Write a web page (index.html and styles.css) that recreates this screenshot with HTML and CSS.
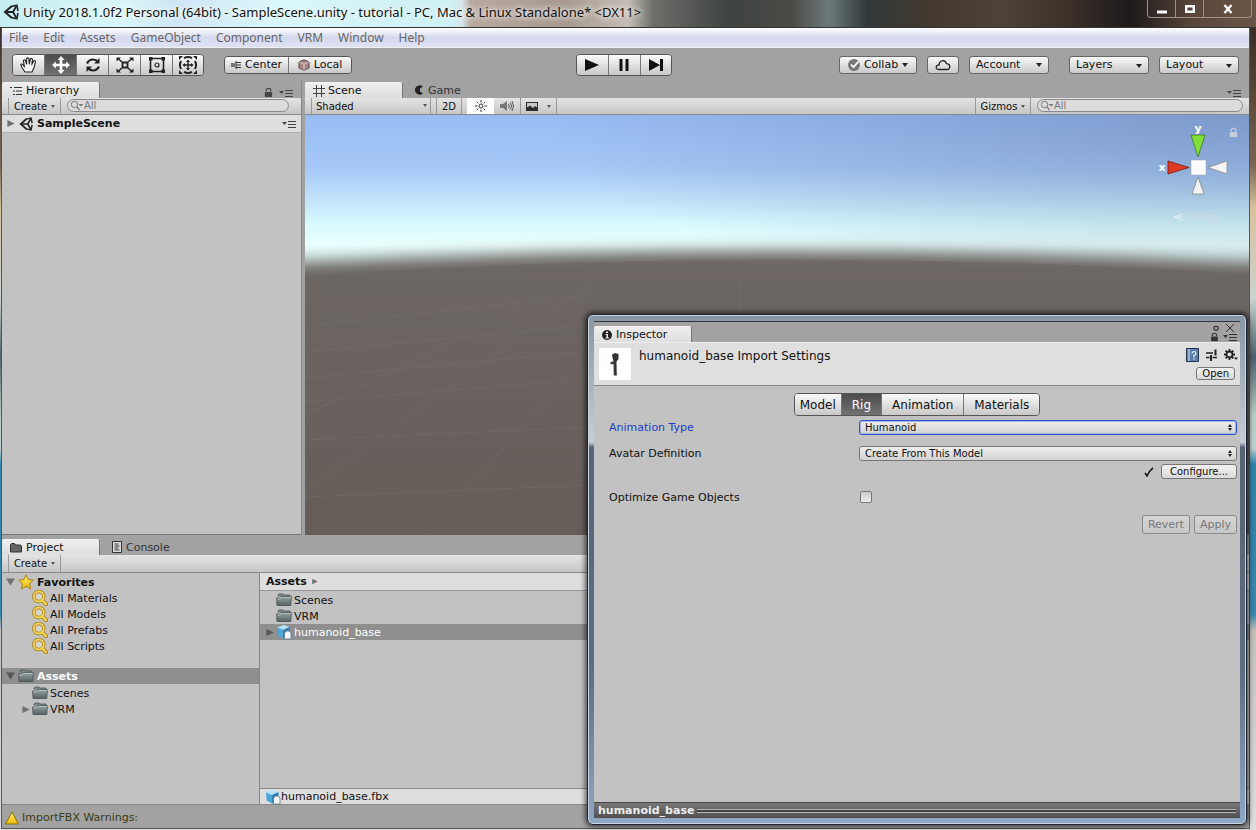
FILE: index.html
```
<!DOCTYPE html>
<html lang="en">
<head>
    <meta charset="UTF-8">
    <meta name="viewport" content="width=device-width, initial-scale=1.0">
    <title>Unity 2018.1.0f2 Personal (64bit) - SampleScene.unity</title>
    <link rel="stylesheet" href="styles.css">
</head>
<body>
    <!-- shared icons -->
    <svg class="defs" width="0" height="0">
        <defs>
            <linearGradient id="g-folder" x1="0" y1="0" x2="0" y2="1">
                <stop offset="0" stop-color="#9aa5a6"/><stop offset="1" stop-color="#566164"/>
            </linearGradient>
            <linearGradient id="g-gold" x1="0" y1="0" x2="0" y2="1">
                <stop offset="0" stop-color="#fff27a"/><stop offset="1" stop-color="#f0b800"/>
            </linearGradient>
        </defs>
        <symbol id="i-folder" viewBox="0 0 16 16">
            <path d="M2 4.500V3l1-1h4l1 1h6v2" fill="#7c888a" stroke="#4d5759" stroke-width=".8"/>
            <path d="M1 13.500 0.600 6h3L5 4.500h10.300L14.800 13.500z" fill="url(#g-folder)" stroke="#465053" stroke-width=".8"/>
            <path d="M1.500 7h2.500L5.500 5.400H14.800" fill="none" stroke="#c5cdce" stroke-width=".8"/>
        </symbol>
        <symbol id="i-search" viewBox="0 0 16 16">
            <path d="M9.500 9.500 14 14.200" stroke="#a87f10" stroke-width="4" stroke-linecap="round"/>
            <circle cx="6.800" cy="6.500" r="5" fill="#d8d6c8" stroke="#a87f10" stroke-width="3.400"/>
            <circle cx="6.800" cy="6.500" r="5" fill="none" stroke="#f5d55a" stroke-width="1.800"/>
            <path d="M10 10 14 14.200" stroke="#f5d55a" stroke-width="2.200" stroke-linecap="round"/>
        </symbol>
        <symbol id="i-unity" viewBox="0 0 16 16">
            <path d="M8.500 2.200 2 8l6.500 5.800" fill="none" stroke="#222" stroke-width="2"/>
            <path d="M8 2.500 13.800 1.200 15 7M8 13.500l5.800 1.300L15 9" fill="none" stroke="#222" stroke-width="1.600"/>
            <path d="M2.500 8h7.500L13.500 1.800M10 8l3.500 6.200" fill="none" stroke="#222" stroke-width="1.800"/>
        </symbol>
        <symbol id="i-model" viewBox="0 0 16 16">
            <path d="M1 3.500 8 1l5.500 2-6.500 3z" fill="#b5e4f8"/>
            <path d="M1 3.500 7 6v8.500L1.500 11.500z" fill="#4fa5d6"/>
            <path d="M7 6l6.500-3v8.500L7 14.500z" fill="#2f7fb4"/>
            <path d="M8.500 15V9l2-2H13l2 2v6z" fill="#f4f8fa" stroke="#5d7582" stroke-width=".8"/>
        </symbol>
        <symbol id="i-lock" viewBox="0 0 10 12">
            <path d="M2.500 5V3.500a2.500 2 0 0 1 5 0V5" fill="none" stroke="currentColor" stroke-width="1.300"/>
            <path d="M1 5.500h8V11H1z" fill="currentColor"/>
        </symbol>
        <symbol id="i-menu" viewBox="0 0 14 10">
            <path d="M0 3h5L2.500 6z" fill="currentColor"/>
            <path d="M6 2.500h8M6 5.500h8M6 8.500h8" stroke="currentColor"/>
        </symbol>
        <symbol id="i-filter" viewBox="0 0 14 12">
            <circle cx="4.500" cy="4.500" r="3.200" fill="none" stroke="#777"/>
            <path d="M7 7l2.500 3" stroke="#777" stroke-width="1.200"/><path d="M8.500 4h5L11 6.500z" fill="#777"/>
        </symbol>
        <symbol id="i-right" viewBox="0 0 8 10"><path d="M0 1v8l8-4z" fill="currentColor"/></symbol>
        <symbol id="i-down" viewBox="0 0 10 8"><path d="M0 0h10L5 8z" fill="currentColor"/></symbol>
    </svg>

    <div class="editor">
        <header class="titlebar">
            <svg class="logo" width="16" height="16"><use href="#i-unity"/></svg>
            <h1>Unity 2018.1.0f2 Personal (64bit) - SampleScene.unity - tutorial - PC, Mac &amp; Linux Standalone* &lt;DX11&gt;</h1>
            <div class="win-buttons">
                <button aria-label="Minimize"><svg width="12" height="12" viewBox="0 0 12 12"><path d="M1 7.500h10v3H1z" fill="#fff"/></svg></button>
                <button aria-label="Maximize"><svg width="12" height="12" viewBox="0 0 12 12"><path d="M2.200 3.200h7.600v5.600H2.200z" fill="none" stroke="#fff" stroke-width="2.400"/></svg></button>
                <button class="win-close" aria-label="Close"><svg width="12" height="12" viewBox="0 0 12 12"><path d="M2.500 2 9.500 10M9.500 2 2.500 10" stroke="#fff" stroke-width="2.400"/></svg></button>
            </div>
        </header>

        <div class="client">
            <nav class="menubar">
                <a href="#">File</a><a href="#">Edit</a><a href="#">Assets</a><a href="#">GameObject</a><a href="#">Component</a><a href="#">VRM</a><a href="#">Window</a><a href="#">Help</a>
            </nav>

            <div class="toolbar">
                <div class="btn-group tools">
                    <button aria-label="Hand"><svg width="20" height="18" viewBox="0 0 20 18"><path d="M6 16 3 11.500 1.800 8.500q1.200-1.300 2.600.8L5.500 11 4.400 4.500Q5.500 3 6.400 4.500L7.600 8 7.600 2.600Q9 1.200 9.900 2.600L10.300 8 11.500 2.800q1.400-1 2 .5L12.800 8.600 14.800 4.800q1.500-.5 1.700 1L15 11.500 13 16z" fill="#f6f6f6" stroke="#222" stroke-width="1.100" stroke-linejoin="round"/></svg></button>
                    <button class="on" aria-label="Move"><svg width="20" height="20" viewBox="0 0 20 20"><path d="M10 1 13.500 5H11.300V8.700H15V6.500L19 10 15 13.500V11.300H11.300V15H13.500L10 19 6.500 15H8.700V11.300H5V13.500L1 10 5 6.500V8.700H8.700V5H6.500z" fill="#fff"/></svg></button>
                    <button aria-label="Rotate"><svg width="18" height="18" viewBox="0 0 18 18"><path d="M3 7.500Q5 3.500 9 3.500q3 0 5 2.500M15 10.500q-2 4-6 4-3 0-5-2.500" fill="none" stroke="#222" stroke-width="2.200"/><path d="M15.500 2v5.500H10zM2.500 16v-5.500H8z" fill="#222"/></svg></button>
                    <button aria-label="Scale"><svg width="20" height="18" viewBox="0 0 20 18"><path d="M7.500 6.500h5v5h-5z" fill="none" stroke="#222" stroke-width="1.800"/><path d="M3 2.500 7 6M17 2.500 13 6M3 15.500 7 12M17 15.500 13 12" stroke="#222" stroke-width="1.500"/><path d="M1.500 1.500H6L1.500 5.500zM18.500 1.500H14l4.500 4zM1.500 16.500H6l-4.500-4zM18.500 16.500H14l4.500-4z" fill="#222"/></svg></button>
                    <button aria-label="Rect"><svg width="20" height="18" viewBox="0 0 20 18"><path d="M3.500 2.500h13v13h-13z" fill="none" stroke="#222" stroke-width="1.600"/><circle cx="10" cy="9" r="2" fill="none" stroke="#222" stroke-width="1.200"/><path d="M2 1h3.500v3.500H2zM14.500 1H18v3.500h-3.500zM2 13.500h3.500V17H2zM14.500 13.500H18V17h-3.500z" fill="#222"/></svg></button>
                    <button aria-label="Transform"><svg width="20" height="20" viewBox="0 0 20 20"><g fill="none" stroke="#222" stroke-width="2"><path d="M6 3.100Q10 .7 14 3.100M6 16.900q4 2.400 8 0M3.100 6Q.7 10 3.100 14M16.900 6q2.400 4 0 8"/></g><path d="M10 5.500v9M5.500 10h9" stroke="#222" stroke-width="1.400"/><path d="M8 7 10 4.500 12 7zM8 13l2 2.500 2-2.500zM7 8 4.500 10 7 12zM13 8l2.500 2-2.500 2z" fill="#222"/><path d="M1 1h4L1 5zM19 1h-4l4 4zM1 19h4l-4-4zM19 19h-4l4-4z" fill="#222"/></svg></button>
                </div>
                <div class="btn-group pivots">
                    <button><svg width="10" height="10" viewBox="0 0 10 10"><path d="M0 3h4v4H0z" fill="#777"/><path d="M5 1v8M5 2.500h5M5 5h5M5 7.500h5" stroke="#333"/></svg>Center</button>
                    <button><svg width="12" height="12" viewBox="0 0 12 12"><path d="M6 .8 11 3v6L6 11.200 1 9V3z" fill="#a88" stroke="#544"/><path d="M1 3l5 2.200L11 3M6 5.200v6" fill="none" stroke="#dcc"/></svg>Local</button>
                </div>
                <div class="btn-group play">
                    <button aria-label="Play"><svg width="16" height="14" viewBox="0 0 16 14"><path d="M1 1v12l14-6z" fill="#111"/></svg></button>
                    <button aria-label="Pause"><svg width="12" height="14" viewBox="0 0 12 14"><path d="M1.500 1h3v12h-3zM7.500 1h3v12h-3z" fill="#111"/></svg></button>
                    <button aria-label="Step"><svg width="16" height="14" viewBox="0 0 16 14"><path d="M1 1v12l11-6zM12 1h3v12h-3z" fill="#111"/></svg></button>
                </div>
                <div class="account">
                    <button class="tb collab"><svg width="12" height="12" viewBox="0 0 12 12"><circle cx="6" cy="6" r="6" fill="#777"/><path d="M3 5.500 5.500 8.200 10.500 2.500" fill="none" stroke="#fff" stroke-width="1.800"/></svg>Collab<i class="caret"></i></button>
                    <button class="tb cloud" aria-label="Services"><svg width="16" height="12" viewBox="0 0 16 12"><path d="M4 10.500Q1 10.500 1.200 8 1.500 6 4 6 4.500 2 8 1.700q2.500 0 3.500 3 3.500.6 3.300 3.300-.3 2.500-2.800 2.500z" fill="none" stroke="#222" stroke-width="1.300"/></svg></button>
                    <button class="tb drop">Account<i class="caret"></i></button>
                    <span class="pick layers"><select class="tb" aria-label="Layers"><option>Layers</option></select></span>
                    <span class="pick"><select class="tb" aria-label="Layout"><option>Layout</option></select></span>
                </div>
            </div>

            <div class="upper">
                <section class="hierarchy">
                    <div class="tabs">
                        <button class="tab on"><svg width="12" height="10" viewBox="0 0 12 10"><path d="M0 1.500h2M4 1.500h8M3 5h2M6 5h6M3 8.500h2M6 8.500h6" stroke="#333"/></svg>Hierarchy</button>
                        <span class="tab-icons"><svg width="9" height="11"><use href="#i-lock"/></svg><svg width="14" height="10"><use href="#i-menu"/></svg></span>
                    </div>
                    <div class="bar">
                        <button class="mini create">Create<i class="caret"></i></button>
                        <label class="search"><svg width="14" height="12"><use href="#i-filter"/></svg><input type="text" placeholder="All" aria-label="Search hierarchy"></label>
                    </div>
                    <div class="scene-row"><svg class="gray" width="8" height="9"><use href="#i-right"/></svg><svg width="14" height="14"><use href="#i-unity"/></svg><b>SampleScene</b><svg class="end" width="14" height="10"><use href="#i-menu"/></svg></div>
                </section>

                <section class="scene">
                    <div class="tabs">
                        <button class="tab on"><svg width="12" height="12" viewBox="0 0 12 12"><path d="M3.500 0v12M8.500 0v12M0 3.500h12M0 8.500h12" stroke="#444"/></svg>Scene</button>
                        <button class="tab game"><svg width="10" height="10" viewBox="0 0 10 10"><path d="M9 1.500A4.800 4.800 0 1 0 9 8.500L6 6.500V3.500z" fill="#222"/></svg>Game</button>
                        <span class="tab-icons"><svg width="14" height="10"><use href="#i-menu"/></svg></span>
                    </div>
                    <div class="bar">
                        <span class="pick flat"><select class="mini" aria-label="Draw mode"><option>Shaded</option></select></span>
                        <button class="mini two-d">2D</button>
                        <button class="mini light on" aria-label="Lighting"><svg width="12" height="12" viewBox="0 0 12 12"><circle cx="6" cy="6" r="2" fill="none" stroke="#333"/><path d="M6 0v2.500M6 9.500V12M0 6h2.500M9.500 6H12M1.800 1.800l1.600 1.600M8.600 8.600l1.600 1.600M1.800 10.200l1.600-1.600M8.600 3.400l1.600-1.600" stroke="#333"/></svg></button>
                        <button class="mini sound" aria-label="Audio"><svg width="14" height="12" viewBox="0 0 14 12"><path d="M0 4h3l4-3v10L3 8H0z" fill="#777"/><path d="M8.500 4q1.500 2 0 4M10.300 2.500q2.500 3.500 0 7M12 1q3 5 0 10" fill="none" stroke="#555"/></svg></button>
                        <button class="mini fx" aria-label="Effects"><svg width="12" height="9" viewBox="0 0 12 9"><path d="M0 0h12v9H0z" fill="#2b2b2b"/><path d="M1 1h10v4.500L9 4 7 6 4 3.500 1 5.500z" fill="#c8c8c8"/></svg><i class="caret"></i></button>
                        <button class="mini gizmos">Gizmos<i class="caret"></i></button>
                        <label class="search"><svg width="14" height="12"><use href="#i-filter"/></svg><input type="text" placeholder="All" aria-label="Search scene"></label>
                    </div>
                    <div class="viewport">
                        <svg class="ground" viewBox="0 0 944 420" preserveAspectRatio="none">
                            <defs><filter id="haze" x="-10%" y="-10%" width="120%" height="120%"><feGaussianBlur stdDeviation="0 8"/></filter>
                            <linearGradient id="g-ground" x1="0" y1="0" x2="0" y2="1"><stop offset="0" stop-color="#6d6764"/><stop offset="1" stop-color="#655c57"/></linearGradient></defs>
                            <path d="M-80 153Q470 119 1030 153V500H-80z" fill="url(#g-ground)" filter="url(#haze)"/>
                            <path d="M0 161Q470 129 944 159V420H0z" fill="url(#g-ground)" opacity=".7"/>
                            <g stroke="#8b8480" stroke-width="1" opacity=".2" fill="none">
                                <path d="M0 211 285 180M0 237 285 210M0 263 285 236M0 287 285 264M0 325 285 312M0 382 285 370"/>
                                <path d="M0 376 285 170M120 420 283 240M0 300 220 190M435 164V200"/>
                            </g>
                        </svg>
                        <svg class="gizmo" width="90" height="110" viewBox="0 0 90 110">
                            <path d="M34 20h14l-7 22z" fill="#7fe03a" stroke="#3b7a1c" stroke-width=".8"/>
                            <path d="M11 46v13l21-6.500z" fill="#e03a22" stroke="#7a1c10" stroke-width=".8"/>
                            <path d="M70 46v13l-19-6.500z" fill="#f4f4f4" stroke="#888" stroke-width=".8"/>
                            <path d="M35 79h12L41 62z" fill="#f4f4f4" stroke="#888" stroke-width=".8"/>
                            <path d="M34 45h15v15H34z" fill="#fcfcfc" stroke="#aab" stroke-width=".6"/>
                            <path d="M26 99l-9 3 9 3M17 102h9" fill="none" stroke="#fff" opacity=".5"/>
                            <text x="41" y="17">y</text><text x="5" y="56">x</text><text class="persp" x="46" y="106">Persp</text>
                        </svg>
                        <svg class="view-lock" width="9" height="11"><use href="#i-lock"/></svg>
                    </div>
                </section>
            </div>

            <section class="project">
                <div class="tabs">
                    <button class="tab on"><svg width="12" height="10" viewBox="0 0 12 10"><path d="M.5 9V2L1.500.5h3L5.500 2h5l1 1v6z" fill="#666" stroke="#333"/></svg>Project</button>
                    <button class="tab"><svg width="10" height="12" viewBox="0 0 10 12"><path d="M.5.5h9v11h-9z" fill="#ddd" stroke="#333"/><path d="M2.500 3h4M2.500 5h5M2.500 7h4M2.500 9h5" stroke="#333"/></svg>Console</button>
                </div>
                <div class="bar">
                    <button class="mini create">Create<i class="caret"></i></button>
                </div>
                <div class="columns">
                    <ul class="tree">
                        <li class="lv0"><svg class="gray" width="9" height="8"><use href="#i-down"/></svg><svg width="16" height="16" viewBox="0 0 16 16"><path d="M8 .8 10.200 5.600 15.400 6.200 11.500 9.700 12.600 14.900 8 12.200 3.400 14.900 4.500 9.700.6 6.200 5.800 5.600z" fill="url(#g-gold)" stroke="#a87f10"/></svg><b>Favorites</b></li>
                        <li class="lv1"><svg width="16" height="16"><use href="#i-search"/></svg>All Materials</li>
                        <li class="lv1"><svg width="16" height="16"><use href="#i-search"/></svg>All Models</li>
                        <li class="lv1"><svg width="16" height="16"><use href="#i-search"/></svg>All Prefabs</li>
                        <li class="lv1"><svg width="16" height="16"><use href="#i-search"/></svg>All Scripts</li>
                        <li class="lv0 selected spaced"><svg class="gray" width="9" height="8"><use href="#i-down"/></svg><svg width="16" height="16"><use href="#i-folder"/></svg><b>Assets</b></li>
                        <li class="lv1"><svg width="16" height="16"><use href="#i-folder"/></svg>Scenes</li>
                        <li class="lv1 branch"><svg class="gray" width="8" height="9"><use href="#i-right"/></svg><svg width="16" height="16"><use href="#i-folder"/></svg>VRM</li>
                    </ul>
                    <div class="files">
                        <div class="crumb"><b>Assets</b><svg class="gray" width="6" height="7"><use href="#i-right"/></svg></div>
                        <ul>
                            <li><svg width="16" height="16"><use href="#i-folder"/></svg>Scenes</li>
                            <li><svg width="16" height="16"><use href="#i-folder"/></svg>VRM</li>
                            <li class="selected branch"><svg class="gray" width="8" height="9"><use href="#i-right"/></svg><svg width="16" height="16"><use href="#i-model"/></svg>humanoid_base</li>
                        </ul>
                        <div class="path"><svg width="16" height="16"><use href="#i-model"/></svg>humanoid_base.fbx</div>
                    </div>
                </div>
            </section>

            <footer class="status"><svg width="14" height="14" viewBox="0 0 14 14"><path d="M7 1 13.300 13H.7z" fill="url(#g-gold)" stroke="#8a7400"/></svg>ImportFBX Warnings:</footer>
        </div>
    </div>

    <!-- floating inspector window -->
    <aside class="inspector">
        <div class="inspector-body">
            <div class="tabs">
                <button class="tab on"><svg width="10" height="10" viewBox="0 0 10 10"><circle cx="5" cy="5" r="5" fill="#222"/><path d="M4 1.500h2v1.500H4zM3.500 4H6v3.500h1v1H3.500v-1h1V5h-1z" fill="#eee"/></svg>Inspector</button>
                <div class="frame-icons">
                    <svg class="max" width="6" height="6" viewBox="0 0 6 6"><path d="M1 1.500h4V5H1z" fill="none" stroke="#222"/></svg>
                    <svg width="8" height="8" viewBox="0 0 8 8"><path d="M0 0l8 8M8 0 0 8" stroke="#333"/></svg>
                    <svg width="9" height="10"><use href="#i-lock"/></svg>
                    <svg width="14" height="10"><use href="#i-menu"/></svg>
                </div>
            </div>
            <div class="asset-head">
                <svg class="thumb" width="32" height="32" viewBox="0 0 32 32"><path d="M0 0h32v32H0z" fill="#fff"/><path d="M13 6.500 16 5l3.500 1v5l-2 2.500.3 14h-3l-.3-11.500-3 .3v-2l3-1-1-3.500z" fill="#333"/></svg>
                <h2>humanoid_base Import Settings</h2>
                <div class="head-actions">
                    <div class="head-icons">
                        <svg width="13" height="14" viewBox="0 0 13 14"><path d="M.5.5h12v13H.5z" fill="#5b80ae" stroke="#22364f"/><path d="M3 1v12" stroke="#dce6f2"/><path d="M6 5.500Q6.200 3.500 8 3.500t2 2q0 1-2 2V9M8 10v1.500" fill="none" stroke="#fff" stroke-width="1.200"/></svg>
                        <svg width="11" height="12" viewBox="0 0 11 12"><path d="M0 4h7M0 8.500h3.500M6.500 8.500H11" stroke="#222" stroke-width="1.500"/><path d="M8.500.5h2v6h-2zM4 6h2v6H4z" fill="#222"/></svg>
                        <svg width="14" height="12" viewBox="0 0 14 12"><circle cx="5.500" cy="5.500" r="3" fill="none" stroke="#222" stroke-width="1.800"/><path d="M5.500 0v2M5.500 9v2M0 5.500h2M9 5.500h2M1.600 1.600 3 3M8 8l1.400 1.400M1.600 9.400 3 8M8 3l1.400-1.400" stroke="#222" stroke-width="1.800"/><path d="M10 8.500h4L12 11z" fill="#222"/></svg>
                    </div>
                    <button class="small">Open</button>
                </div>
            </div>
            <div class="btn-group modes">
                <button>Model</button><button class="on">Rig</button><button>Animation</button><button>Materials</button>
            </div>
            <div class="fields">
                <div class="field active"><label for="anim-type">Animation Type</label><span class="pick updown"><select id="anim-type"><option>Humanoid</option></select></span></div>
                <div class="field"><label for="avatar">Avatar Definition</label><span class="pick updown"><select id="avatar"><option>Create From This Model</option></select></span></div>
                <div class="configure"><svg width="10" height="10" viewBox="0 0 10 10"><path d="M1 6 3 9Q5 4 9 .8" fill="none" stroke="#111" stroke-width="1.500"/></svg><button class="small">Configure...</button></div>
                <div class="field"><label for="optimize">Optimize Game Objects</label><input type="checkbox" id="optimize"></div>
                <div class="apply"><button disabled>Revert</button><button disabled>Apply</button></div>
            </div>
            <div class="preview-bar"><b>humanoid_base</b><i></i></div>
        </div>
    </aside>
</body>
</html>
```
FILE: styles.css
```
* {
    box-sizing: border-box;
}
body {
    margin: 0;
    font-family: "DejaVu Sans", Verdana, sans-serif;
    font-size: 11px;
    color: #111;
    background: linear-gradient(#2b211c, #7c6650 20%, #d8c19a 25%, #c9d3d0 36%, #4a616a 43%, #b8cbc5 50%, #bcd0d0 54%, #2d83a8 56%, #3a88ab 74%, #c4c0bc 76%, #dedede);
}
svg {
    flex: none;
}
.defs {
    position: absolute;
}
button, select, input {
    font: inherit;
    color: inherit;
    margin: 0;
}
button {
    display: inline-flex;
    align-items: center;
    justify-content: center;
    gap: 4px;
    padding: 0;
    border: 0;
    background: none;
}
select {
    appearance: none;
    width: 100%;
    border: 0;
    border-radius: 0;
    background: none;
}
ul {
    list-style: none;
    margin: 0;
    padding: 0;
}
.gray {
    color: #707070;
}
.caret, .pick::after {
    border: 3px solid transparent;
    border-top: 4px solid #222;
    border-bottom: 0;
}
.pick {
    position: relative;
    display: block;
}
.pick::after {
    content: "";
    position: absolute;
    right: 7px;
    top: 8px;
    pointer-events: none;
}

/* main window */
.editor {
    min-height: 100vh;
    padding: 0 6px 1px 1px;
    display: flex;
    flex-direction: column;
}
.titlebar {
    height: 28px;
    margin: 0 -6px 0 -1px;
    padding: 0 4px 3px 3px;
    display: flex;
    align-items: center;
    gap: 4px;
    border-bottom: 1px solid #333;
    background: linear-gradient(90deg, #c4eef2, #d8f6f8 10%, #cfe6f6 14%, #d9f8fa 22%, #cdf0f4 36%, #d5e4e8 36.800%, #b7a89e 37.500%, #a89a90 45%, #c3bdb4 50%, #6d6f6a 52%, #3e4341 58%, #4c4a46 63%, #6c7a7c 66%, #30383a 69%, #43392f 74%, #4d4338 80%, #3c3129 85%, #1d1a1b 90%, #59463a 95%, #6b5546);
}
.titlebar h1 {
    flex: 1;
    margin: 0;
    font: 13px "Noto Sans", "Open Sans", sans-serif;
    white-space: nowrap;
    text-shadow: 0 0 6px #fff, 0 0 6px #fff;
}
.win-buttons {
    display: flex;
    align-self: flex-start;
    height: 18px;
    border: 1px solid #a09289;
    border-top: 0;
    border-radius: 0 0 4px 4px;
}
.win-buttons button {
    width: 28px;
    border-right: 1px solid #a09289;
}
.win-buttons .win-close {
    width: 47px;
    border: 0;
}
.client {
    flex: 1;
    display: flex;
    flex-direction: column;
    background: #a2a2a2;
    border: 1px solid #555;
    border-top: 0;
}
.menubar {
    height: 20px;
    padding-left: 7px;
    display: flex;
    gap: 15px;
    align-items: center;
    background: linear-gradient(#fff, #e6e9f5 30%, #d5d9ee 50%, #dfe2f4);
    border-bottom: 1px solid #f0f0f0;
}
.menubar a {
    color: #666;
    font: 12px "Noto Sans", "Open Sans", sans-serif;
    text-decoration: none;
}
.toolbar {
    height: 33px;
    padding: 0 10px;
    display: grid;
    grid-template-columns: 1fr auto 1fr;
    grid-template-areas: "left play right";
    align-items: center;
}
.btn-group {
    display: inline-flex;
    border: 1px solid #555;
    border-radius: 4px;
    overflow: hidden;
}
.btn-group button {
    background: linear-gradient(#fafafa, #c8c8c8);
    border-right: 1px solid #777;
}
.btn-group button:last-child {
    border-right: 0;
}
.btn-group .on {
    background: linear-gradient(#4c4c4c, #727272);
    color: #fff;
}
.tools, .pivots {
    grid-area: left;
}
.tools button, .play button {
    width: 32px;
    height: 20px;
}
.tools button:last-child, .play button:last-child {
    width: 30px;
}
.tools {
    justify-self: start;
}
.pivots {
    margin-left: 212px;
    justify-self: start;
}
.pivots button {
    width: 64px;
    height: 16px;
}
.pivots button:last-child {
    width: 62px;
}
.play {
    grid-area: play;
    margin-right: 4px;
}
.account {
    grid-area: right;
    display: flex;
    justify-content: flex-end;
    gap: 10px;
}
.tb {
    height: 18px;
    padding: 0 6px;
    border: 1px solid #666;
    border-radius: 3px;
    background: linear-gradient(#f8f8f8, #cacaca);
}
.collab {
    width: 78px;
}
.cloud {
    width: 32px;
}
.account .pick, .drop {
    width: 80px;
}
.drop {
    justify-content: space-between;
}
.account .layers {
    margin-left: 10px;
}

/* tabs and strips */
.tabs {
    height: 17px;
    padding-right: 8px;
    display: flex;
    align-items: flex-end;
    background: #a2a2a2;
}
.tab {
    height: 16px;
    min-width: 98px;
    padding: 0 8px;
    justify-content: flex-start;
    color: #333;
}
.tab.on {
    color: #111;
    background: linear-gradient(#eee, #dedede);
    border-top: 1px solid #f4f4f4;
    border-right: 1px solid #777;
    border-radius: 2px 3px 0 0;
}
.tab-icons {
    margin-left: auto;
    display: flex;
    align-items: center;
    gap: 6px;
    color: #444;
}
.bar {
    height: 17px;
    padding-left: 6px;
    display: flex;
    align-items: stretch;
    border-bottom: 1px solid #8a8a8a;
    background: linear-gradient(#e4e4e4, #c6c6c6);
}
.mini {
    font-size: 10px;
    border: 1px solid #999;
    border-width: 0 1px;
}
.bar .caret, .bar .pick::after {
    border-width: 3px 2px 0;
    border-top-color: #555;
}
.create {
    width: 53px;
}
.search {
    display: flex;
    flex: 1;
    height: 13px;
    margin: 1px 12px 0 6px;
    padding-left: 2px;
    align-items: center;
    border: 1px solid #888;
    border-radius: 7px;
    background: #dcdcdc;
}
.search input {
    flex: 1;
    min-width: 0;
    height: 12px;
    padding: 0;
    border: 0;
    outline: 0;
    font-size: 10px;
    background: none;
}
.search input::placeholder {
    color: #777;
    opacity: 1;
}

.upper {
    flex: 1;
    display: flex;
    gap: 3px;
}
.hierarchy {
    width: 300px;
    display: flex;
    flex-direction: column;
    background: #c2c2c2;
    border-bottom: 1px solid #777;
    border-right: 1px solid #888;
}
.scene-row {
    height: 18px;
    padding: 0 5px;
    display: flex;
    align-items: center;
    gap: 4px;
    background: #dedede;
    border-bottom: 1px solid #b0b0b0;
}
.end {
    margin-left: auto;
    color: #444;
}
.scene {
    flex: 1;
    display: flex;
    flex-direction: column;
}
.scene .tab {
    gap: 3px;
}
.scene .game {
    padding-left: 11px;
    gap: 4px;
}
.flat {
    width: 120px;
}
.flat select {
    height: 16px;
    padding: 0 4px;
    border: 1px solid #999;
    border-width: 0 1px;
}
.bar .flat::after {
    right: 4px;
    top: 6px;
}
.two-d {
    width: 26px;
    margin: 0 5px;
}
.light {
    width: 27px;
    border: 0;
}
.light.on {
    background: #fff;
}
.sound {
    width: 26px;
    border: 0;
}
.fx {
    width: 37px;
    gap: 9px;
}
.gizmos {
    width: 56px;
    margin-left: auto;
}
.scene .search {
    flex: 0 0 206px;
    margin-right: 6px;
}
.viewport {
    flex: 1;
    position: relative;
    overflow: hidden;
    background:
        radial-gradient(ellipse 75% 45% at 100% 0, rgba(70, 90, 130, .35), transparent),
        linear-gradient(#98bbf3, #a6c9f8 13%, #c0e2fa 20%, #d8faff 26%, #eafffe 31%, #d0e4e2 35%, #8d908e 40%);
}
.ground {
    position: absolute;
    width: 100%;
    height: 100%;
}
.gizmo {
    position: absolute;
    right: 2px;
    top: 0;
}
.gizmo text {
    fill: #fff;
    font-size: 11px;
    font-weight: bold;
    text-anchor: middle;
}
.gizmo .persp {
    fill: #d9dde4;
    font-weight: normal;
    opacity: .7;
}
.view-lock {
    position: absolute;
    right: 11px;
    top: 12px;
    color: #c8d0dc;
}

/* project browser */
.project {
    height: 270px;
    display: flex;
    flex-direction: column;
}
.project .tabs {
    height: 20px;
}
.project .tab + .tab {
    padding-left: 12px;
}
.project .bar {
    height: 18px;
}
.columns {
    flex: 1;
    display: flex;
    background: #c2c2c2;
    border-bottom: 1px solid #888;
}
.tree {
    width: 258px;
    padding-top: 1px;
    border-right: 1px solid #888;
}
.columns li {
    height: 16px;
    display: flex;
    align-items: center;
    gap: 2px;
}
.columns .lv0 {
    padding-left: 4px;
    gap: 3px;
}
.columns .lv1 {
    padding-left: 30px;
}
.columns .lv1.branch {
    padding-left: 20px;
    gap: 2px;
}
.columns .spaced {
    margin-top: 14px;
    margin-bottom: 1px;
}
.columns .selected {
    color: #fff;
    background: #8f8f8f;
}
.selected .gray {
    color: #555;
}
.files {
    flex: 1;
    display: flex;
    flex-direction: column;
}
.crumb {
    height: 18px;
    padding-left: 6px;
    display: flex;
    align-items: center;
    gap: 5px;
    margin-bottom: 1px;
    background: #dedede;
    border-bottom: 1px solid #999;
}
.files li {
    padding-left: 16px;
}
.files .branch {
    padding-left: 6px;
    gap: 2px;
}
.path {
    height: 16px;
    margin-top: auto;
    padding-left: 5px;
    display: flex;
    align-items: center;
    background: #dedede;
    border-top: 1px solid #888;
}
.status {
    height: 23px;
    padding: 2px 0 0 3px;
    display: flex;
    align-items: center;
    gap: 3px;
    color: #3c3c14;
}

/* inspector */
.inspector {
    position: absolute;
    left: 587px;
    right: 9px;
    top: 314px;
    bottom: 5px;
    padding: 6px;
    display: flex;
    border: 1px solid #1d2430;
    border-radius: 6px;
    background: linear-gradient(#8794a3, #c4ced8 25%, #566476 26%, #5d6d82 70%, #8fa8c6);
    box-shadow: inset 0 0 0 1px #c8d4e0, 0 0 5px 2px rgba(0, 0, 0, .6);
}
.inspector-body {
    flex: 1;
    display: flex;
    flex-direction: column;
    background: #c2c2c2;
    border-top: 1px solid #333;
}
.inspector .tabs {
    height: 20px;
    padding-right: 3px;
    justify-content: space-between;
}
.frame-icons {
    width: 28px;
    display: grid;
    grid-template-columns: 10px 14px;
    gap: 0 4px;
    align-items: center;
    justify-items: center;
    color: #333;
}
.max {
    justify-self: end;
}
.asset-head {
    height: 44px;
    padding: 5px;
    display: flex;
    gap: 8px;
    background: #dfdfdf;
    border-top: 1px solid #eee;
    border-bottom: 1px solid #8a8a8a;
}
.asset-head h2 {
    flex: 1;
    margin: 0;
    font-size: 12px;
    line-height: 16px;
    font-weight: normal;
}
.head-actions {
    display: flex;
    flex-direction: column;
    align-items: flex-end;
    gap: 5px;
}
.head-icons {
    display: flex;
    align-items: center;
    gap: 7px;
    margin-right: -3px;
}
.small {
    height: 15px;
    padding: 0 5px;
    font-size: 10px;
    border: 1px solid #777;
    border-radius: 3px;
    background: linear-gradient(#f2f2f2, #dadada);
}
.modes {
    margin: 7px auto 3px;
}
.modes button {
    height: 21px;
    padding: 0 10px;
    font-size: 12px;
}
.modes button:first-child {
    padding: 0 5px;
}
.fields {
    flex: 1;
    padding: 0 3px 0 15px;
}
.field {
    display: flex;
    align-items: center;
    height: 16px;
    margin-bottom: 10px;
}
.field label {
    width: 250px;
}
.field .pick {
    flex: 1;
}
.field select {
    display: block;
    height: 15px;
    padding: 0 5px;
    font-size: 10px;
    border: 1px solid #777;
    border-radius: 3px;
    background: linear-gradient(#eee, #d2d2d2);
}
.field input {
    appearance: none;
    width: 12px;
    height: 12px;
    margin-left: 1px;
    border: 1px solid #777;
    border-radius: 2px;
    background: linear-gradient(#ccc, #eee);
}
.active label {
    color: #1c3bc8;
}
.active select {
    border-color: #2f55cc;
    box-shadow: inset 0 0 0 1px #a5b4e0;
}
.updown::before {
    content: "";
    position: absolute;
    right: 5px;
    top: 4px;
    border: 2px solid transparent;
    border-top: 0;
    border-bottom: 3px solid #222;
}
.updown::after {
    right: 5px;
    border-width: 3px 2px 0;
}
.configure {
    display: flex;
    justify-content: flex-end;
    align-items: center;
    gap: 7px;
    margin: -7px 0 10px;
}
.configure .small {
    padding: 0 8px;
}
.apply {
    display: flex;
    justify-content: flex-end;
    gap: 4px;
    margin-top: 10px;
}
.apply button {
    height: 19px;
    padding: 0 5px;
    color: #777;
    border: 1px solid #8a8a8a;
    border-radius: 3px;
    background: linear-gradient(#d4d4d4, #c8c8c8);
}
.preview-bar {
    height: 16px;
    padding: 0 4px;
    display: flex;
    align-items: center;
    gap: 3px;
    color: #eee;
    background: linear-gradient(#777, #505050);
    border-top: 1px solid #444;
}
.preview-bar i {
    flex: 1;
    height: 4px;
    border: 1px solid #b5b5b5;
    border-width: 1px 0;
    background: #444;
}
```
